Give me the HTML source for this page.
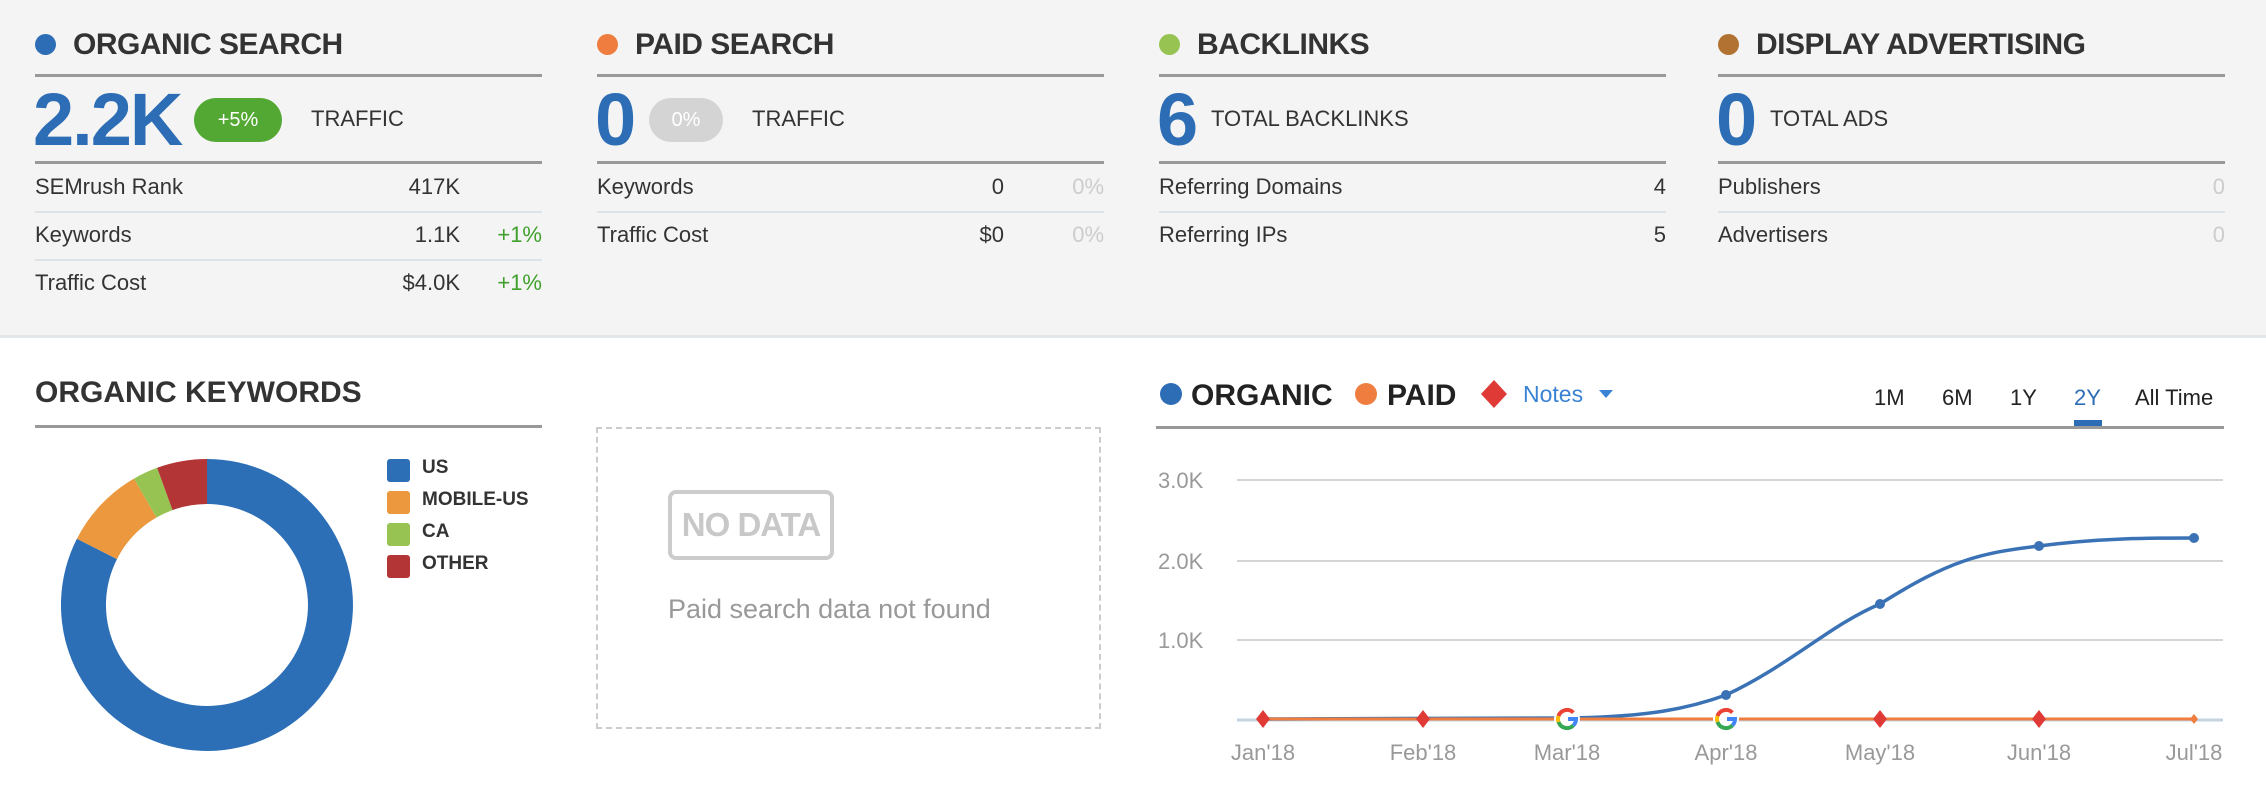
<!DOCTYPE html>
<html><head><meta charset="utf-8"><style>
*{margin:0;padding:0;box-sizing:border-box}
body{width:2266px;height:802px;background:#fff;font-family:"Liberation Sans",sans-serif;position:relative;overflow:hidden;color:#333}
.top{position:absolute;left:0;top:0;width:2266px;height:338px;background:#f4f4f4;border-bottom:3px solid #e3e6e8}
.col{position:absolute;top:0;width:507px;height:338px}
.h{position:absolute;left:0;top:28px;font-size:30px;font-weight:bold;color:#333;white-space:nowrap;letter-spacing:-0.5px}
.h i{display:inline-block;width:21px;height:21px;border-radius:50%;margin-right:17px;vertical-align:-1px}
.l1{position:absolute;left:0;top:74px;width:507px;height:3px;background:#999}
.l2{position:absolute;left:0;top:161px;width:507px;height:3px;background:#999}
.big{position:absolute;left:-2px;top:82px;font-size:74px;font-weight:bold;color:#2d6db5;line-height:76px;letter-spacing:-2px}
.lab{position:absolute;top:106px;font-size:22px;color:#333}
.pill{position:absolute;left:159px;top:98px;width:88px;height:44px;border-radius:22px;color:#fff;font-size:20px;text-align:center;line-height:44px}
.row{position:absolute;left:0;width:507px;font-size:22px;height:30px;line-height:30px}
.row .v{position:absolute;right:82px;top:0}
.row .p{position:absolute;right:0;top:0;color:#3fa12b}
.row .g{color:#ccc}
.sep{position:absolute;left:0;width:507px;height:2px;background:#dde3e6}
.bt{position:absolute;font-size:30px;font-weight:bold;color:#333;white-space:nowrap}
.leg{position:absolute;left:387px;font-size:19px;font-weight:bold;color:#333}
.leg i{position:absolute;left:0;top:2px;width:23px;height:23px;border-radius:3px}
.leg span{position:absolute;left:35px;top:0;white-space:nowrap}
.tb{position:absolute;top:385px;font-size:22px;color:#222}
</style></head><body>
<div class="top">
 <div class="col" style="left:35px">
  <div class="h"><i style="background:#2d6db5"></i>ORGANIC SEARCH</div>
  <div class="l1"></div>
  <div class="big">2.2K</div>
  <div class="pill" style="background:#52a832">+5%</div>
  <div class="lab" style="left:276px">TRAFFIC</div>
  <div class="l2"></div>
  <div class="row" style="top:172px">SEMrush Rank<span class="v">417K</span></div>
  <div class="sep" style="top:211px"></div>
  <div class="row" style="top:220px">Keywords<span class="v">1.1K</span><span class="p">+1%</span></div>
  <div class="sep" style="top:259px"></div>
  <div class="row" style="top:268px">Traffic Cost<span class="v">$4.0K</span><span class="p">+1%</span></div>
 </div>
 <div class="col" style="left:597px">
  <div class="h"><i style="background:#ee7d3f"></i>PAID SEARCH</div>
  <div class="l1"></div>
  <div class="big">0</div>
  <div class="pill" style="background:#d4d4d4;left:52px;width:74px">0%</div>
  <div class="lab" style="left:155px">TRAFFIC</div>
  <div class="l2"></div>
  <div class="row" style="top:172px">Keywords<span class="v" style="right:100px">0</span><span class="p g">0%</span></div>
  <div class="sep" style="top:211px"></div>
  <div class="row" style="top:220px">Traffic Cost<span class="v" style="right:100px">$0</span><span class="p g">0%</span></div>
 </div>
 <div class="col" style="left:1159px">
  <div class="h"><i style="background:#97c353"></i>BACKLINKS</div>
  <div class="l1"></div>
  <div class="big">6</div>
  <div class="lab" style="left:52px">TOTAL BACKLINKS</div>
  <div class="l2"></div>
  <div class="row" style="top:172px">Referring Domains<span class="v" style="right:0">4</span></div>
  <div class="sep" style="top:211px"></div>
  <div class="row" style="top:220px">Referring IPs<span class="v" style="right:0">5</span></div>
 </div>
 <div class="col" style="left:1718px">
  <div class="h"><i style="background:#b27232"></i>DISPLAY ADVERTISING</div>
  <div class="l1"></div>
  <div class="big">0</div>
  <div class="lab" style="left:52px">TOTAL ADS</div>
  <div class="l2"></div>
  <div class="row" style="top:172px">Publishers<span class="v g" style="right:0">0</span></div>
  <div class="sep" style="top:211px"></div>
  <div class="row" style="top:220px">Advertisers<span class="v g" style="right:0">0</span></div>
 </div>
</div>

<div class="bt" style="left:35px;top:376px">ORGANIC KEYWORDS</div>
<div style="position:absolute;left:35px;top:425px;width:507px;height:3px;background:#999"></div>
<svg style="position:absolute;left:0;top:0" width="600" height="802">
 <g transform="translate(207,605)">
  <path d="M0,-146 A146,146 0 1 1 -130.1,-66.3 L-90,-45.9 A101,101 0 1 0 0,-101 Z" fill="#2d6fb7"/>
  <path d="M-130.1,-66.3 A146,146 0 0 1 -73,-126.4 L-50.5,-87.5 A101,101 0 0 0 -90,-45.9 Z" fill="#ec983e"/>
  <path d="M-73,-126.4 A146,146 0 0 1 -49.9,-137.2 L-34.5,-94.9 A101,101 0 0 0 -50.5,-87.5 Z" fill="#97c353"/>
  <path d="M-49.9,-137.2 A146,146 0 0 1 0,-146 L0,-101 A101,101 0 0 0 -34.5,-94.9 Z" fill="#b33535"/>
 </g>
</svg>
<div class="leg" style="top:457px"><i style="background:#2d6fb7"></i><span>US</span></div>
<div class="leg" style="top:489px"><i style="background:#ec983e"></i><span>MOBILE-US</span></div>
<div class="leg" style="top:521px"><i style="background:#97c353"></i><span>CA</span></div>
<div class="leg" style="top:553px"><i style="background:#b33535"></i><span>OTHER</span></div>

<div style="position:absolute;left:596px;top:427px;width:505px;height:302px;border:2px dashed #ccc"></div>
<div style="position:absolute;left:668px;top:490px;width:166px;height:70px;border:4px solid #ccc;border-radius:8px;color:#c8c8c8;font-size:33px;font-weight:bold;text-align:center;line-height:62px;letter-spacing:-1px;white-space:nowrap;overflow:hidden">NO DATA</div>
<div style="position:absolute;left:668px;top:594px;font-size:27px;color:#999;white-space:nowrap">Paid search data not found</div>

<svg style="position:absolute;left:1159px;top:370px" width="1000" height="50">
 <circle cx="12" cy="24" r="11" fill="#2d6db5"/>
 <text x="32" y="35" font-family="Liberation Sans" font-weight="bold" font-size="30" fill="#222">ORGANIC</text>
 <circle cx="207" cy="24" r="11" fill="#ee7d3f"/>
 <text x="228" y="35" font-family="Liberation Sans" font-weight="bold" font-size="30" fill="#222">PAID</text>
 <path d="M335,10 L348,24 L335,38 L322,24 Z" fill="#e03a37"/>
 <text x="364" y="32" font-family="Liberation Sans" font-size="23" fill="#3a82d4">Notes</text>
 <path d="M440,20 L454,20 L447,28 Z" fill="#3a82d4"/>
</svg>
<div class="tb" style="left:1874px">1M</div>
<div class="tb" style="left:1942px">6M</div>
<div class="tb" style="left:2010px">1Y</div>
<div class="tb" style="left:2074px;color:#2d6db5">2Y</div>
<div class="tb" style="left:2135px">All Time</div>
<div style="position:absolute;left:2074px;top:420px;width:28px;height:7px;background:#2d6db5"></div>
<div style="position:absolute;left:1156px;top:426px;width:1068px;height:3px;background:#999"></div>

<svg style="position:absolute;left:0;top:0" width="2266" height="802" font-family="Liberation Sans">
 <defs>
  <g id="gg">
   <circle r="13" fill="#fff"/>
   <path d="M6.4,-6.4 A9,9 0 0 0 -8.5,-3" fill="none" stroke="#ea4335" stroke-width="4"/>
   <path d="M-8.5,-3 A9,9 0 0 0 -8.5,3" fill="none" stroke="#fbbc05" stroke-width="4"/>
   <path d="M-8.5,3 A9,9 0 0 0 6.4,6.4" fill="none" stroke="#34a853" stroke-width="4"/>
   <path d="M6.4,6.4 A9,9 0 0 0 9,0 L1,0" fill="none" stroke="#4285f4" stroke-width="4"/>
  </g>
 </defs>
 <g stroke="#d4d4d4" stroke-width="2">
  <line x1="1237" y1="480" x2="2223" y2="480"/>
  <line x1="1237" y1="561" x2="2223" y2="561"/>
  <line x1="1237" y1="640" x2="2223" y2="640"/>
 </g>
 <line x1="1237" y1="720" x2="2223" y2="720" stroke="#c5d3e0" stroke-width="3"/>
 <g font-size="22" fill="#999">
  <text x="1158" y="488">3.0K</text>
  <text x="1158" y="569">2.0K</text>
  <text x="1158" y="648">1.0K</text>
 </g>
 <g font-size="22" fill="#999" text-anchor="middle">
  <text x="1263" y="760">Jan'18</text>
  <text x="1423" y="760">Feb'18</text>
  <text x="1567" y="760">Mar'18</text>
  <text x="1726" y="760">Apr'18</text>
  <text x="1880" y="760">May'18</text>
  <text x="2039" y="760">Jun'18</text>
  <text x="2194" y="760">Jul'18</text>
 </g>
 <path d="M1263,719 L1567,718 C1650,717 1690,708 1726,695 C1790,665 1830,625 1880,604 C1950,560 1980,553 2039,546 C2100,538 2150,538 2194,538" fill="none" stroke="#3a72b5" stroke-width="3.5"/>
 <line x1="1263" y1="719" x2="2194" y2="719" stroke="#ee7d3f" stroke-width="3"/>
 <g fill="#3a72b5">
  <circle cx="1726" cy="695" r="5"/><circle cx="1880" cy="604" r="5"/><circle cx="2039" cy="546" r="5"/><circle cx="2194" cy="538" r="5"/>
 </g>
 <g fill="#e03a37">
  <path d="M1263,710 L1270,719 L1263,728 L1256,719Z"/>
  <path d="M1423,710 L1430,719 L1423,728 L1416,719Z"/>
  <path d="M1880,710 L1887,719 L1880,728 L1873,719Z"/>
  <path d="M2039,710 L2046,719 L2039,728 L2032,719Z"/>
 </g>
 <path d="M2194,714 L2198,719 L2194,724 L2190,719Z" fill="#ee7d3f"/>
 <use href="#gg" x="1567" y="719"/>
 <use href="#gg" x="1726" y="719"/>
</svg>
</body></html>
